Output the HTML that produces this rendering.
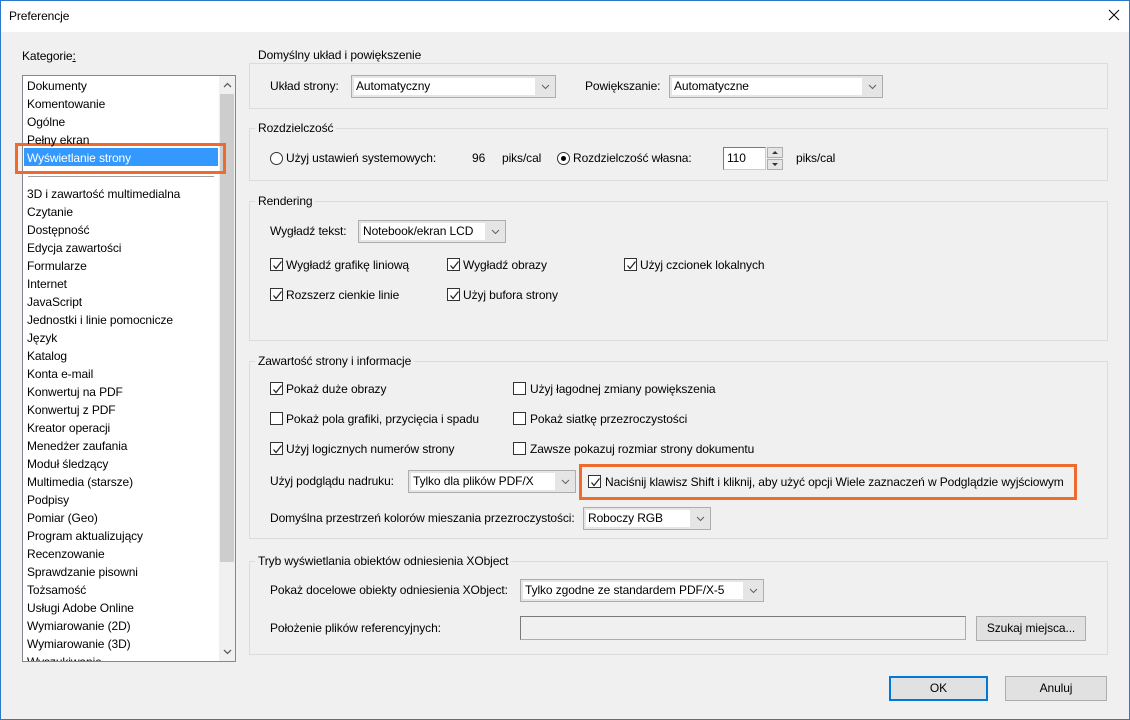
<!DOCTYPE html>
<html><head><meta charset="utf-8"><style>
*{box-sizing:border-box;margin:0;padding:0}
body{width:1130px;height:720px;background:#f0f0f0;font-family:"Liberation Sans",sans-serif;font-size:12px;letter-spacing:-0.1px;color:#000;position:relative;overflow:hidden}
.a{position:absolute;white-space:nowrap;line-height:16px}
.win{position:absolute;left:0;top:0;width:1130px;height:720px;border:1px solid #2b79c8;pointer-events:none}
.title{position:absolute;left:0;top:0;width:1130px;height:32px;background:#fff}
.grp{position:absolute;border:1px solid #dcdcdc}
.gt{position:absolute;background:#f0f0f0;padding:0 3px;line-height:16px;white-space:nowrap}
.cb{position:absolute;height:23px;border:1px solid #adadad;background:#e5e5e5}
.cb .in{position:absolute;left:2px;top:2px;bottom:2px;right:20px;background:#fff;padding-left:2px;line-height:17px;overflow:hidden}
.cb svg{position:absolute;right:5px;top:8px}
.chk{position:absolute;width:13px;height:13px;border:1px solid #333;background:#fff}
.chk svg{position:absolute;left:1px;top:1px}
.btn{position:absolute;border:1px solid #adadad;background:#e1e1e1;text-align:center}
.rad{position:absolute;width:13px;height:13px;border:1px solid #333;border-radius:50%;background:#fff}
</style></head><body>
<div class="title"></div>
<div class="a" style="left:9px;top:8px">Preferencje</div>
<svg class="a" style="left:1108px;top:9px" width="12" height="12"><path d="M1 1L11 11M11 1L1 11" stroke="#000" stroke-width="1"/></svg>

<div class="a" style="left:22px;top:48px">Kategorie<u>:</u></div>
<div style="position:absolute;left:22px;top:75px;width:214px;height:587px;border:1px solid #828790;background:#fff"></div>
<div style="position:absolute;left:219px;top:76px;width:16px;height:585px;background:#f0f0f0"></div>
<div style="position:absolute;left:220px;top:94px;width:14px;height:468px;background:#cdcdcd"></div>
<svg class="a" style="left:223px;top:82px" width="9" height="6"><path d="M1 5L4.5 1.5L8 5" stroke="#606060" fill="none" stroke-width="1.3"/></svg>
<svg class="a" style="left:223px;top:649px" width="9" height="6"><path d="M1 1L4.5 4.5L8 1" stroke="#606060" fill="none" stroke-width="1.3"/></svg>
<div style="position:absolute;left:24px;top:148px;width:194px;height:18px;background:#3399ff"></div>
<div style="position:absolute;left:15px;top:143px;width:211px;height:31px;border:3px solid #ee6b2d"></div>
<div style="position:absolute;left:28px;top:176px;width:186px;height:1px;background:#a0a0a0"></div>
<div style="position:absolute;left:23px;top:76px;width:196px;height:585px;overflow:hidden">
<div class="a" style="left:4px;top:1px;line-height:18px">Dokumenty<br>Komentowanie<br>Ogólne<br>Pełny ekran<br><span style="color:#fff">Wyświetlanie strony</span></div>
<div class="a" style="left:4px;top:109px;line-height:18px">3D i zawartość multimedialna<br>Czytanie<br>Dostępność<br>Edycja zawartości<br>Formularze<br>Internet<br>JavaScript<br>Jednostki i linie pomocnicze<br>Język<br>Katalog<br>Konta e-mail<br>Konwertuj na PDF<br>Konwertuj z PDF<br>Kreator operacji<br>Menedżer zaufania<br>Moduł śledzący<br>Multimedia (starsze)<br>Podpisy<br>Pomiar (Geo)<br>Program aktualizujący<br>Recenzowanie<br>Sprawdzanie pisowni<br>Tożsamość<br>Usługi Adobe Online<br>Wymiarowanie (2D)<br>Wymiarowanie (3D)<br>Wyszukiwanie</div>
</div>

<div class="grp" style="left:249px;top:63px;width:859px;height:46px"></div>
<div class="gt" style="left:255px;top:47px">Domyślny układ i powiększenie</div>
<div class="a" style="left:270px;top:78px">Układ strony:</div>
<div class="cb" style="left:351px;top:75px;width:205px"><div class="in">Automatyczny</div><svg width="9" height="6"><path d="M1 1L4.5 4.5L8 1" stroke="#606060" fill="none"/></svg></div>
<div class="a" style="left:585px;top:78px">Powiększanie:</div>
<div class="cb" style="left:669px;top:75px;width:214px"><div class="in">Automatyczne</div><svg width="9" height="6"><path d="M1 1L4.5 4.5L8 1" stroke="#606060" fill="none"/></svg></div>

<div class="grp" style="left:249px;top:128px;width:859px;height:53px"></div>
<div class="gt" style="left:255px;top:120px">Rozdzielczość</div>
<div class="rad" style="left:270px;top:152px"></div>
<div class="a" style="left:286px;top:150px">Użyj ustawień systemowych:</div>
<div class="a" style="left:472px;top:150px">96</div>
<div class="a" style="left:502px;top:150px">piks/cal</div>
<div class="rad" style="left:557px;top:152px"><div style="position:absolute;left:3px;top:3px;width:5px;height:5px;border-radius:50%;background:#000"></div></div>
<div class="a" style="left:573px;top:150px">Rozdzielczość własna:</div>
<div style="position:absolute;left:723px;top:147px;width:43px;height:23px;background:#fff;border:1px solid #7a7a7a;border-right-color:#ccc;border-bottom-color:#ccc;padding:2px 3px;line-height:16px">110</div>
<div style="position:absolute;left:767px;top:147px;width:16px;height:11px;border:1px solid #adadad;background:#e5e5e5"></div>
<div style="position:absolute;left:767px;top:159px;width:16px;height:11px;border:1px solid #adadad;background:#e5e5e5"></div>
<svg class="a" style="left:771px;top:150px" width="8" height="18"><path d="M1 4L4 1L7 4Z M1 13L4 16L7 13Z" fill="#333"/></svg>
<div class="a" style="left:796px;top:150px">piks/cal</div>

<div class="grp" style="left:249px;top:201px;width:859px;height:140px"></div>
<div class="gt" style="left:255px;top:193px">Rendering</div>
<div class="a" style="left:270px;top:223px">Wygładź tekst:</div>
<div class="cb" style="left:358px;top:220px;width:148px"><div class="in">Notebook/ekran LCD</div><svg width="9" height="6"><path d="M1 1L4.5 4.5L8 1" stroke="#606060" fill="none"/></svg></div>

<div class="grp" style="left:249px;top:361px;width:859px;height:178px"></div>
<div class="gt" style="left:255px;top:353px">Zawartość strony i informacje</div>
<div class="a" style="left:270px;top:473px">Użyj podglądu nadruku:</div>
<div class="cb" style="left:408px;top:470px;width:168px"><div class="in">Tylko dla plików PDF/X</div><svg width="9" height="6"><path d="M1 1L4.5 4.5L8 1" stroke="#606060" fill="none"/></svg></div>
<div style="position:absolute;left:579px;top:464px;width:498px;height:36px;border:3px solid #ee6b2d"></div>
<div class="a" style="left:270px;top:510px">Domyślna przestrzeń kolorów mieszania przezroczystości:</div>
<div class="cb" style="left:583px;top:507px;width:128px"><div class="in">Roboczy RGB</div><svg width="9" height="6"><path d="M1 1L4.5 4.5L8 1" stroke="#606060" fill="none"/></svg></div>

<div class="grp" style="left:249px;top:561px;width:859px;height:94px"></div>
<div class="gt" style="left:255px;top:553px">Tryb wyświetlania obiektów odniesienia XObject</div>
<div class="a" style="left:270px;top:582px">Pokaż docelowe obiekty odniesienia XObject:</div>
<div class="cb" style="left:520px;top:579px;width:244px"><div class="in">Tylko zgodne ze standardem PDF/X-5</div><svg width="9" height="6"><path d="M1 1L4.5 4.5L8 1" stroke="#606060" fill="none"/></svg></div>
<div class="a" style="left:270px;top:620px">Położenie plików referencyjnych:</div>
<div style="position:absolute;left:520px;top:616px;width:446px;height:24px;border:1px solid #adadad;border-top-color:#7a7a7a;border-left-color:#7a7a7a;background:#f0f0f0"></div>
<div class="btn" style="left:976px;top:616px;width:110px;height:25px;line-height:23px">Szukaj miejsca...</div>

<div class="btn" style="left:889px;top:676px;width:99px;height:25px;line-height:21px;border:2px solid #0078d7">OK</div>
<div class="btn" style="left:1005px;top:676px;width:102px;height:25px;line-height:23px">Anuluj</div>

<div class="chk" style="left:270px;top:258px"><svg width="11" height="11"><path d="M1.5 5.5L4 8.5L9.5 1.5" stroke="#222" fill="none" stroke-width="1.2"/></svg></div>
<div class="a" style="left:286px;top:257px">Wygładź grafikę liniową</div>
<div class="chk" style="left:447px;top:258px"><svg width="11" height="11"><path d="M1.5 5.5L4 8.5L9.5 1.5" stroke="#222" fill="none" stroke-width="1.2"/></svg></div>
<div class="a" style="left:463px;top:257px">Wygładź obrazy</div>
<div class="chk" style="left:624px;top:258px"><svg width="11" height="11"><path d="M1.5 5.5L4 8.5L9.5 1.5" stroke="#222" fill="none" stroke-width="1.2"/></svg></div>
<div class="a" style="left:640px;top:257px">Użyj czcionek lokalnych</div>
<div class="chk" style="left:270px;top:288px"><svg width="11" height="11"><path d="M1.5 5.5L4 8.5L9.5 1.5" stroke="#222" fill="none" stroke-width="1.2"/></svg></div>
<div class="a" style="left:286px;top:287px">Rozszerz cienkie linie</div>
<div class="chk" style="left:447px;top:288px"><svg width="11" height="11"><path d="M1.5 5.5L4 8.5L9.5 1.5" stroke="#222" fill="none" stroke-width="1.2"/></svg></div>
<div class="a" style="left:463px;top:287px">Użyj bufora strony</div>

<div class="chk" style="left:270px;top:382px"><svg width="11" height="11"><path d="M1.5 5.5L4 8.5L9.5 1.5" stroke="#222" fill="none" stroke-width="1.2"/></svg></div>
<div class="a" style="left:286px;top:381px">Pokaż duże obrazy</div>
<div class="chk" style="left:270px;top:412px"></div>
<div class="a" style="left:286px;top:411px">Pokaż pola grafiki, przycięcia i spadu</div>
<div class="chk" style="left:270px;top:442px"><svg width="11" height="11"><path d="M1.5 5.5L4 8.5L9.5 1.5" stroke="#222" fill="none" stroke-width="1.2"/></svg></div>
<div class="a" style="left:286px;top:441px">Użyj logicznych numerów strony</div>
<div class="chk" style="left:513px;top:382px"></div>
<div class="a" style="left:530px;top:381px">Użyj łagodnej zmiany powiększenia</div>
<div class="chk" style="left:513px;top:412px"></div>
<div class="a" style="left:530px;top:411px">Pokaż siatkę przezroczystości</div>
<div class="chk" style="left:513px;top:442px"></div>
<div class="a" style="left:530px;top:441px">Zawsze pokazuj rozmiar strony dokumentu</div>
<div class="chk" style="left:588px;top:475px"><svg width="11" height="11"><path d="M1.5 5.5L4 8.5L9.5 1.5" stroke="#222" fill="none" stroke-width="1.2"/></svg></div>
<div class="a" style="left:605px;top:474px">Naciśnij klawisz Shift i kliknij, aby użyć opcji Wiele zaznaczeń w Podglądzie wyjściowym</div>

<div class="win"></div>
</body></html>
